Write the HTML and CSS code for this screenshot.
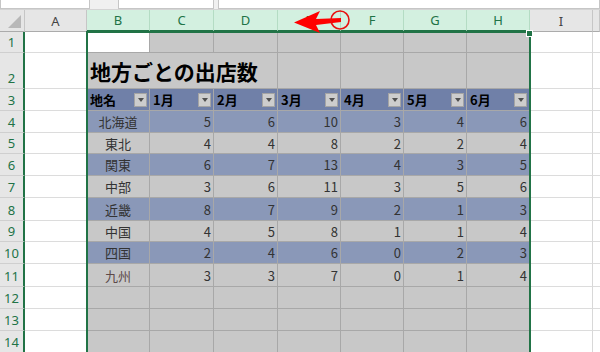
FILE: index.html
```html
<!DOCTYPE html>
<html lang="ja">
<head>
    <meta charset="UTF-8">
    <meta name="viewport" content="width=device-width, initial-scale=1.0">
    <title>地方ごとの出店数</title>
    <link rel="stylesheet" href="styles.css">
</head>
<body>
    <div class="app">
        <!-- name box / formula bar strip -->
        <div class="topbar">
            <div class="box box-name"></div>
            <div class="box box-fx"></div>
            <div class="box box-formula"></div>
        </div>

        <div class="sheet">
            <!-- column headers -->
            <div class="corner"></div>
            <div class="ch">A</div>
            <div class="ch sel">B</div>
            <div class="ch sel">C</div>
            <div class="ch sel">D</div>
            <div class="ch sel">E</div>
            <div class="ch sel">F</div>
            <div class="ch sel">G</div>
            <div class="ch sel">H</div>
            <div class="ch">I</div>
            <div class="ch end"></div>

            <!-- row 1 -->
            <div class="rh">1</div>
            <div class="w"></div>
            <div class="active"></div>
            <div class="s"></div><div class="s"></div><div class="s"></div><div class="s"></div><div class="s"></div><div class="s"></div>
            <div class="w"></div><div class="w end"></div>

            <!-- row 2 -->
            <div class="rh">2</div>
            <div class="w"></div>
            <div class="s title">地方ごとの出店数</div>
            <div class="s"></div><div class="s"></div><div class="s"></div><div class="s"></div>
            <div class="w"></div><div class="w end"></div>

            <!-- row 3: table header -->
            <div class="rh">3</div>
            <div class="w"></div>
            <div class="th"><span>地名</span><i class="drop"></i></div>
            <div class="th"><span>1月</span><i class="drop"></i></div>
            <div class="th"><span>2月</span><i class="drop"></i></div>
            <div class="th"><span>3月</span><i class="drop"></i></div>
            <div class="th"><span>4月</span><i class="drop"></i></div>
            <div class="th"><span>5月</span><i class="drop"></i></div>
            <div class="th"><span>6月</span><i class="drop"></i></div>
            <div class="w"></div><div class="w end"></div>

            <!-- row 4 -->
            <div class="rh">4</div>
            <div class="w"></div>
            <div class="td name band">北海道</div>
            <div class="td band">5</div><div class="td band">6</div><div class="td band">10</div><div class="td band">3</div><div class="td band">4</div><div class="td band">6</div>
            <div class="w"></div><div class="w end"></div>

            <!-- row 5 -->
            <div class="rh">5</div>
            <div class="w"></div>
            <div class="td name">東北</div>
            <div class="td">4</div><div class="td">4</div><div class="td">8</div><div class="td">2</div><div class="td">2</div><div class="td">4</div>
            <div class="w"></div><div class="w end"></div>

            <!-- row 6 -->
            <div class="rh">6</div>
            <div class="w"></div>
            <div class="td name band">関東</div>
            <div class="td band">6</div><div class="td band">7</div><div class="td band">13</div><div class="td band">4</div><div class="td band">3</div><div class="td band">5</div>
            <div class="w"></div><div class="w end"></div>

            <!-- row 7 -->
            <div class="rh">7</div>
            <div class="w"></div>
            <div class="td name">中部</div>
            <div class="td">3</div><div class="td">6</div><div class="td">11</div><div class="td">3</div><div class="td">5</div><div class="td">6</div>
            <div class="w"></div><div class="w end"></div>

            <!-- row 8 -->
            <div class="rh">8</div>
            <div class="w"></div>
            <div class="td name band">近畿</div>
            <div class="td band">8</div><div class="td band">7</div><div class="td band">9</div><div class="td band">2</div><div class="td band">1</div><div class="td band">3</div>
            <div class="w"></div><div class="w end"></div>

            <!-- row 9 -->
            <div class="rh">9</div>
            <div class="w"></div>
            <div class="td name">中国</div>
            <div class="td">4</div><div class="td">5</div><div class="td">8</div><div class="td">1</div><div class="td">1</div><div class="td">4</div>
            <div class="w"></div><div class="w end"></div>

            <!-- row 10 -->
            <div class="rh">10</div>
            <div class="w"></div>
            <div class="td name band">四国</div>
            <div class="td band">2</div><div class="td band">4</div><div class="td band">6</div><div class="td band">0</div><div class="td band">2</div><div class="td band">3</div>
            <div class="w"></div><div class="w end"></div>

            <!-- row 11 -->
            <div class="rh">11</div>
            <div class="w"></div>
            <div class="td name kyushu">九州</div>
            <div class="td">3</div><div class="td">3</div><div class="td">7</div><div class="td">0</div><div class="td">1</div><div class="td">4</div>
            <div class="w"></div><div class="w end"></div>

            <!-- rows 12-14 -->
            <div class="rh">12</div>
            <div class="w"></div>
            <div class="s"></div><div class="s"></div><div class="s"></div><div class="s"></div><div class="s"></div><div class="s"></div><div class="s"></div>
            <div class="w"></div><div class="w end"></div>

            <div class="rh">13</div>
            <div class="w"></div>
            <div class="s"></div><div class="s"></div><div class="s"></div><div class="s"></div><div class="s"></div><div class="s"></div><div class="s"></div>
            <div class="w"></div><div class="w end"></div>

            <div class="rh">14</div>
            <div class="w"></div>
            <div class="s"></div><div class="s"></div><div class="s"></div><div class="s"></div><div class="s"></div><div class="s"></div><div class="s"></div>
            <div class="w"></div><div class="w end"></div>
        </div>

        <!-- selection outline B1:H14 -->
        <div class="selection"><span class="handle"></span></div>

        <!-- red annotation: arrow + circle on column E border -->
        <svg class="callout" width="600" height="40" viewBox="0 0 600 40">
            <polygon points="294,22.5 320,11 316,19 341,18 341,22 316,25 320,33" fill="#f00"/>
            <circle cx="340" cy="20" r="9" fill="none" stroke="#e81010" stroke-width="1.6"/>
        </svg>
    </div>
</body>
</html>
```

FILE: styles.css
```css
body {
    margin: 0;
    padding: 0;
    overflow: hidden;
    font-family: "Noto Sans CJK JP", "Noto Sans", sans-serif;
    color: #222;
}
.app {
    position: relative;
    width: 600px;
    height: 352px;
    overflow: hidden;
    background: #fff;
}
.topbar {
    height: 10px;
    background: #f0f0f0;
    border-bottom: 1px solid #d4d4d4;
    box-sizing: border-box;
    display: flex;
    gap: 4px;
}
.topbar .box {
    background: #fff;
    border: 1px solid #c6c6c6;
    border-top: none;
    box-sizing: border-box;
    height: 9px;
}
.box-name { width: 90px; }
.box-fx { width: 96px; margin-left: 24px; }
.box-formula { flex: 1; }

.sheet {
    display: grid;
    grid-template-columns: 25px 62px 63px 64px 64px 63px 63px 63px 63px 63px 7px;
    grid-template-rows: 22px 21px 36px 22px 22px 21px 22px 22px 23px 21px 22px 23px 22px 22px 22px;
}
.sheet > div {
    box-sizing: border-box;
    border-right: 1px solid #a8a8a8;
    border-bottom: 1px solid #a8a8a8;
    font-size: 13px;
    white-space: nowrap;
    overflow: hidden;
}

/* headers */
.corner {
    background: #e6e6e6;
    position: relative;
    border-bottom-color: #ababab !important;
    border-right-color: #c6c6c6 !important;
}
.corner::after {
    content: "";
    position: absolute;
    right: 3px;
    bottom: 3px;
    border-left: 13px solid transparent;
    border-bottom: 13px solid #b8b8b8;
}
.ch {
    background: #e6e6e6;
    color: #444;
    font-family: "Noto Sans", sans-serif;
    display: flex;
    align-items: center;
    justify-content: center;
    border-right-color: #c6c6c6 !important;
    border-bottom-color: #ababab !important;
}
.ch.sel {
    background: #d3f0e0;
    color: #217346;
    border-right-color: #b4dcc4 !important;
    border-bottom: 2px solid #217346 !important;
}
.rh {
    background: #e6e6e6;
    color: #217346;
    font-family: "Noto Sans", sans-serif;
    display: flex;
    align-items: flex-end;
    justify-content: center;
    padding-bottom: 1px;
    border-right: 2px solid #217346 !important;
    border-bottom-color: #cfcfcf !important;
}

/* plain cells */
.w {
    background: #fff;
    border-right-color: #d8d8d8 !important;
    border-bottom-color: #dcdcdc !important;
}
.w.end {
    border-right: none !important;
}
.s {
    background: #c8c8c8;
}
.active {
    background: #fff;
}
.sheet > .title {
    grid-column: span 3;
    font-size: 21px;
    font-weight: bold;
    color: #000;
    display: flex;
    align-items: flex-end;
    padding: 0 0 2px 3px;
}

/* table */
.th {
    background: #7080a8;
    color: #000;
    font-weight: bold;
    display: flex;
    align-items: center;
    justify-content: space-between;
    padding: 0 2px 0 3px;
}
.drop {
    width: 13px;
    height: 14px;
    box-sizing: border-box;
    background: #cdcdcd;
    border: 1px solid #a4a4a4;
    display: flex;
    align-items: center;
    justify-content: center;
}
.drop::after {
    content: "";
    border-left: 3px solid transparent;
    border-right: 3px solid transparent;
    border-top: 4px solid #505050;
    margin-top: 1px;
}
.td {
    background: #c8c8c8;
    color: #333;
    display: flex;
    align-items: center;
    justify-content: flex-end;
    padding-right: 2px;
}
.td.band {
    background: #8a98b8;
}
.td.name {
    justify-content: center;
    padding-right: 0;
}
.td.kyushu {
    color: #5d4a4a;
}

/* overlays */
.selection {
    position: absolute;
    left: 86px;
    top: 31px;
    width: 445px;
    height: 330px;
    box-sizing: border-box;
    border: 2px solid #217346;
}
.selection .handle {
    position: absolute;
    right: -4px;
    top: -3px;
    width: 5px;
    height: 5px;
    background: #217346;
    border: 1px solid #fff;
}
.callout {
    position: absolute;
    left: 0;
    top: 0;
}
```
